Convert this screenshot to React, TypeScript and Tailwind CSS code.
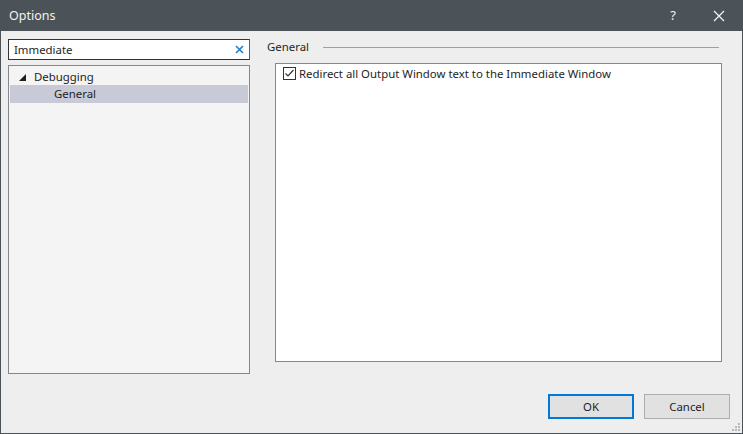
import React, { useState } from 'react';

const font = { fontFamily: '"Noto Sans", "Segoe UI", sans-serif' };

const App: React.FC = () => {
  const [checked, setChecked] = useState(true);
  const [query, setQuery] = useState('Immediate');

  return (
    <div className="w-[743px] h-[434px] flex flex-col bg-[#eeeeee] border border-[#4b5358] text-[11.4px] text-[#1e1e1e] overflow-hidden" style={font}>
      {/* title bar */}
      <div className="h-[30px] shrink-0 bg-[#4b5358] flex items-center text-[#f2f2f2]">
        <span className="pl-[8px] text-[12.5px] flex-1">Options</span>
        <button className="w-[30px] h-[30px] flex items-center justify-center text-[13px] mr-[16px]">?</button>
        <button className="w-[30px] h-[30px] flex items-center justify-center mr-[8px]">
          <svg width="12" height="12" viewBox="0 0 12 12" stroke="#f2f2f2" strokeWidth="1.3">
            <path d="M1 1 L11 11 M11 1 L1 11" />
          </svg>
        </button>
      </div>

      <div className="flex-1 flex flex-col px-[7px]">
        <div className="flex gap-[25px] pt-[8px]">
          {/* left column */}
          <div className="w-[242px] flex flex-col gap-[5px]">
            <div className="h-[21px] bg-white border border-[#333333] border-r-[#0078d7] flex items-center">
              <input
                value={query}
                onChange={e => setQuery(e.target.value)}
                className="flex-1 min-w-0 pl-[5px] outline-none bg-transparent text-[11.4px] text-[#1e1e1e]"
                style={font}
              />
              <svg width="9" height="9" viewBox="0 0 9 9" stroke="#1e7fd0" strokeWidth="1.6" className="mr-[5px]">
                <path d="M1 1 L8 8 M8 1 L1 8" />
              </svg>
            </div>
            <div className="h-[309px] bg-[#f4f4f4] border border-[#85878f] p-[1px] flex flex-col">
              <div className="h-[18px] flex items-center pt-[2px]">
                <svg width="7" height="7" viewBox="0 0 7 7" className="ml-[9px] mr-[8px]">
                  <path d="M7 0 L7 7 L0 7 Z" fill="#1e1e1e" />
                </svg>
                <span>Debugging</span>
              </div>
              <div className="h-[18px] flex items-center bg-[#c9cad7] pl-[44px]">General</div>
            </div>
          </div>

          {/* right column */}
          <div className="flex-1 flex flex-col pr-[13px]">
            <div className="h-[16px] flex items-center mr-[3px]">
              <span className="-ml-[8px]">General</span>
              <div className="flex-1 ml-[14px] h-[1px] bg-[#a0a0a0]" />
            </div>
            <div className="mt-[8px] h-[299px] bg-white border border-[#85878f] pt-[1px] px-[7px]">
              <label className="flex items-center gap-[3px] cursor-pointer">
                <span
                  onClick={() => setChecked(!checked)}
                  className="w-[13px] h-[13px] border border-[#333333] bg-white flex items-center justify-center"
                >
                  {checked && (
                    <svg width="11" height="11" viewBox="0 0 11 11" fill="none" stroke="#333333" strokeWidth="1.2">
                      <path d="M1.5 5.5 L4 8 L9.5 2" />
                    </svg>
                  )}
                </span>
                <span>Redirect all Output Window text to the Immediate Window</span>
              </label>
            </div>
          </div>
        </div>

        {/* buttons */}
        <div className="mt-auto mb-[14px] flex justify-end gap-[10px] pr-[5px]">
          <button className="w-[86px] h-[25px] bg-[#e1e1e1] border-2 border-[#0078d7] text-[11.4px]" style={font}>OK</button>
          <button className="w-[86px] h-[25px] bg-[#e1e1e1] border border-[#adadad] text-[11.4px]" style={font}>Cancel</button>
        </div>
      </div>

      {/* resize grip */}
      <div className="h-0 relative">
        <svg width="8" height="8" viewBox="0 0 8 8" className="absolute right-[2px] bottom-[2px]">
          <rect x="6" y="0" width="2" height="2" fill="#b8b8b8" />
          <rect x="3" y="3" width="2" height="2" fill="#b8b8b8" />
          <rect x="6" y="3" width="2" height="2" fill="#b8b8b8" />
          <rect x="0" y="6" width="2" height="2" fill="#b8b8b8" />
          <rect x="3" y="6" width="2" height="2" fill="#b8b8b8" />
          <rect x="6" y="6" width="2" height="2" fill="#b8b8b8" />
        </svg>
      </div>
    </div>
  );
};

export default App;
